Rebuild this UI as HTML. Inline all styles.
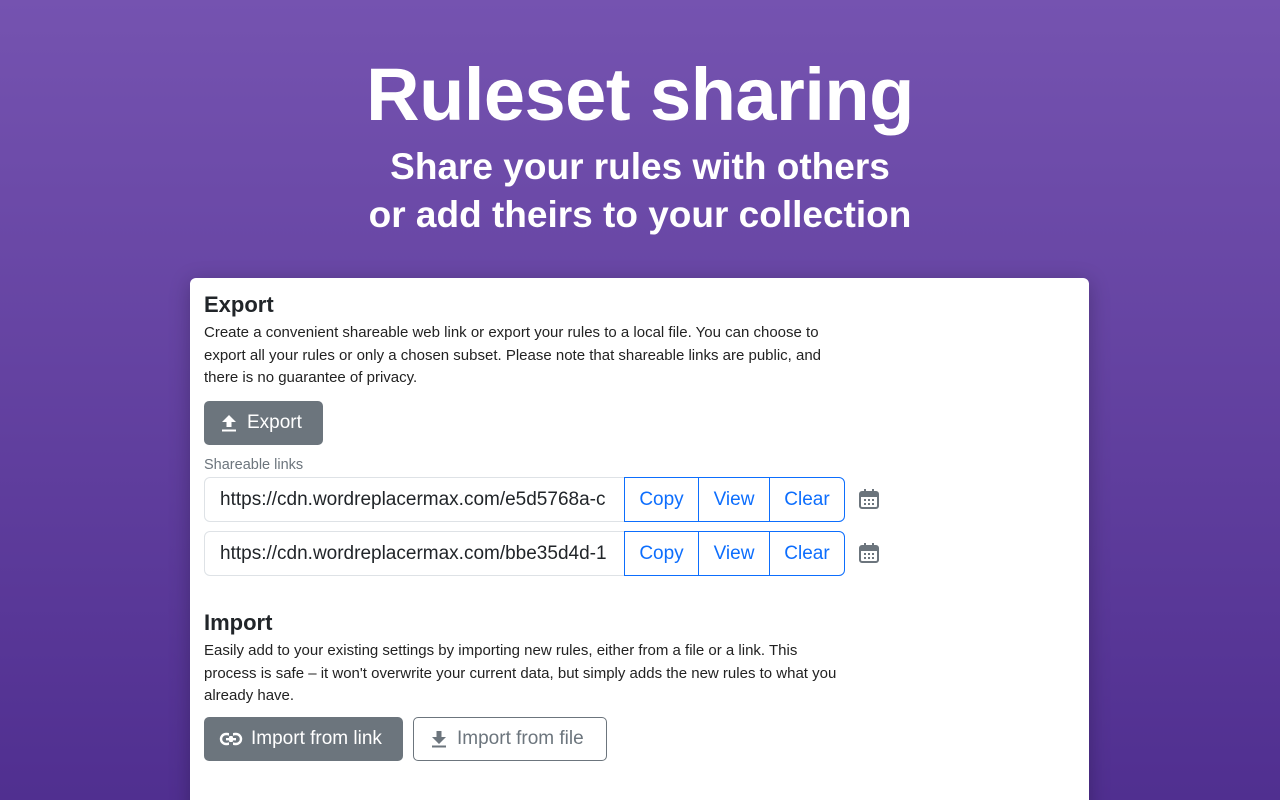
<!DOCTYPE html>
<html><head><meta charset="utf-8"><style>
*{box-sizing:border-box;margin:0;padding:0}
html,body{width:1280px;height:800px;overflow:hidden}
body{background:linear-gradient(#7553b0,#502f90);font-family:"Liberation Sans",sans-serif;position:relative}
h1{position:absolute;top:52px;left:0;width:1280px;text-align:center;color:#fff;font-size:74px;font-weight:bold;letter-spacing:-0.5px}
.sub{position:absolute;top:143px;left:0;width:1280px;text-align:center;color:#fff;font-size:37px;font-weight:bold;line-height:48px}
.card{position:absolute;left:190px;top:278px;width:899px;height:540px;background:#fff;border-radius:6px;box-shadow:0 4px 20px rgba(0,0,0,.25);padding:0 14px;color:#212529}
h2{font-size:22px;font-weight:bold;position:absolute;left:14px}
p{font-size:15px;line-height:22.5px;position:absolute;left:14px;width:652px;color:#222}
.btn{position:absolute;height:44px;border-radius:5px;font-size:19px;display:flex;align-items:center;padding:0 15px;gap:8px}
.dark{background:#6c757d;color:#fff}
.out{border:1px solid #6c757d;color:#6c757d;background:#fff}
.lbl{position:absolute;left:14px;top:179px;font-size:14.5px;color:#6c757d}
.row{position:absolute;left:14px;height:45px;display:flex}
.inp{width:421px;border:1px solid #dee2e6;border-radius:6px 0 0 6px;font-size:19px;padding:0 15px;display:flex;align-items:center;overflow:hidden;white-space:nowrap;color:#212529}
.b{border:1px solid #0d6efd;color:#0d6efd;font-size:19px;display:flex;align-items:center;justify-content:center;margin-left:-1px}
.cal{position:absolute;left:668px;width:22px;height:22px}
</style></head><body>
<h1>Ruleset sharing</h1>
<div class="sub">Share your rules with others<br>or add theirs to your collection</div>
<div class="card">
<h2 style="top:14px">Export</h2>
<p style="top:44px">Create a convenient shareable web link or export your rules to a local file. You can choose to export all your rules or only a chosen subset. Please note that shareable links are public, and there is no guarantee of privacy.</p>
<div class="btn dark" style="left:14px;top:123px;width:119px"><svg width="20" height="20" viewBox="0 0 20 20"><path d="M10 2L3 9h4.5v5h5V9H17z M3 16.5h14v2H3z" fill="#fff"/></svg>Export</div>
<div class="lbl">Shareable links</div>
<div class="row" style="top:199px"><div class="inp">https://cdn.wordreplacermax.com/e5d5768a-c</div><div class="b" style="width:75px">Copy</div><div class="b" style="width:72px">View</div><div class="b" style="width:76px;border-radius:0 6px 6px 0">Clear</div></div>
<div class="row" style="top:253px"><div class="inp">https://cdn.wordreplacermax.com/bbe35d4d-1</div><div class="b" style="width:75px">Copy</div><div class="b" style="width:72px">View</div><div class="b" style="width:76px;border-radius:0 6px 6px 0">Clear</div></div>
<svg class="cal" style="top:210px" viewBox="0 0 22 22"><rect x="2" y="4" width="18" height="16" rx="2" fill="none" stroke="#6c757d" stroke-width="2"/><rect x="2" y="4" width="18" height="5" fill="#6c757d"/><rect x="6" y="1" width="2" height="5" fill="#6c757d"/><rect x="14" y="1" width="2" height="5" fill="#6c757d"/><g fill="#6c757d"><rect x="6" y="11" width="2" height="2"/><rect x="10" y="11" width="2" height="2"/><rect x="14" y="11" width="2" height="2"/><rect x="6" y="15" width="2" height="2"/><rect x="10" y="15" width="2" height="2"/><rect x="14" y="15" width="2" height="2"/></g></svg>
<svg class="cal" style="top:264px" viewBox="0 0 22 22"><rect x="2" y="4" width="18" height="16" rx="2" fill="none" stroke="#6c757d" stroke-width="2"/><rect x="2" y="4" width="18" height="5" fill="#6c757d"/><rect x="6" y="1" width="2" height="5" fill="#6c757d"/><rect x="14" y="1" width="2" height="5" fill="#6c757d"/><g fill="#6c757d"><rect x="6" y="11" width="2" height="2"/><rect x="10" y="11" width="2" height="2"/><rect x="14" y="11" width="2" height="2"/><rect x="6" y="15" width="2" height="2"/><rect x="10" y="15" width="2" height="2"/><rect x="14" y="15" width="2" height="2"/></g></svg>
<h2 style="top:332px">Import</h2>
<p style="top:362px">Easily add to your existing settings by importing new rules, either from a file or a link. This<br>process is safe – it won't overwrite your current data, but simply adds the new rules to what you already have.</p>
<div class="btn dark" style="left:14px;top:439px;width:199px"><svg width="24" height="16" viewBox="0 0 24 16"><rect x="2" y="3" width="11" height="10" rx="5" fill="none" stroke="#fff" stroke-width="2.4"/><rect x="11" y="3" width="11" height="10" rx="5" fill="none" stroke="#fff" stroke-width="2.4"/><rect x="7" y="7" width="10" height="2.4" fill="#fff"/><rect x="10" y="2" width="4" height="3" fill="#6c757d"/><rect x="10" y="11" width="4" height="3" fill="#6c757d"/></svg>Import from link</div>
<div class="btn out" style="left:223px;top:439px;width:194px"><svg width="20" height="20" viewBox="0 0 20 20"><path d="M7.5 2h5v6H17l-7 7-7-7h4.5z M3 16.5h14v2H3z" fill="#6c757d"/></svg>Import from file</div>
</div>
</body></html>
